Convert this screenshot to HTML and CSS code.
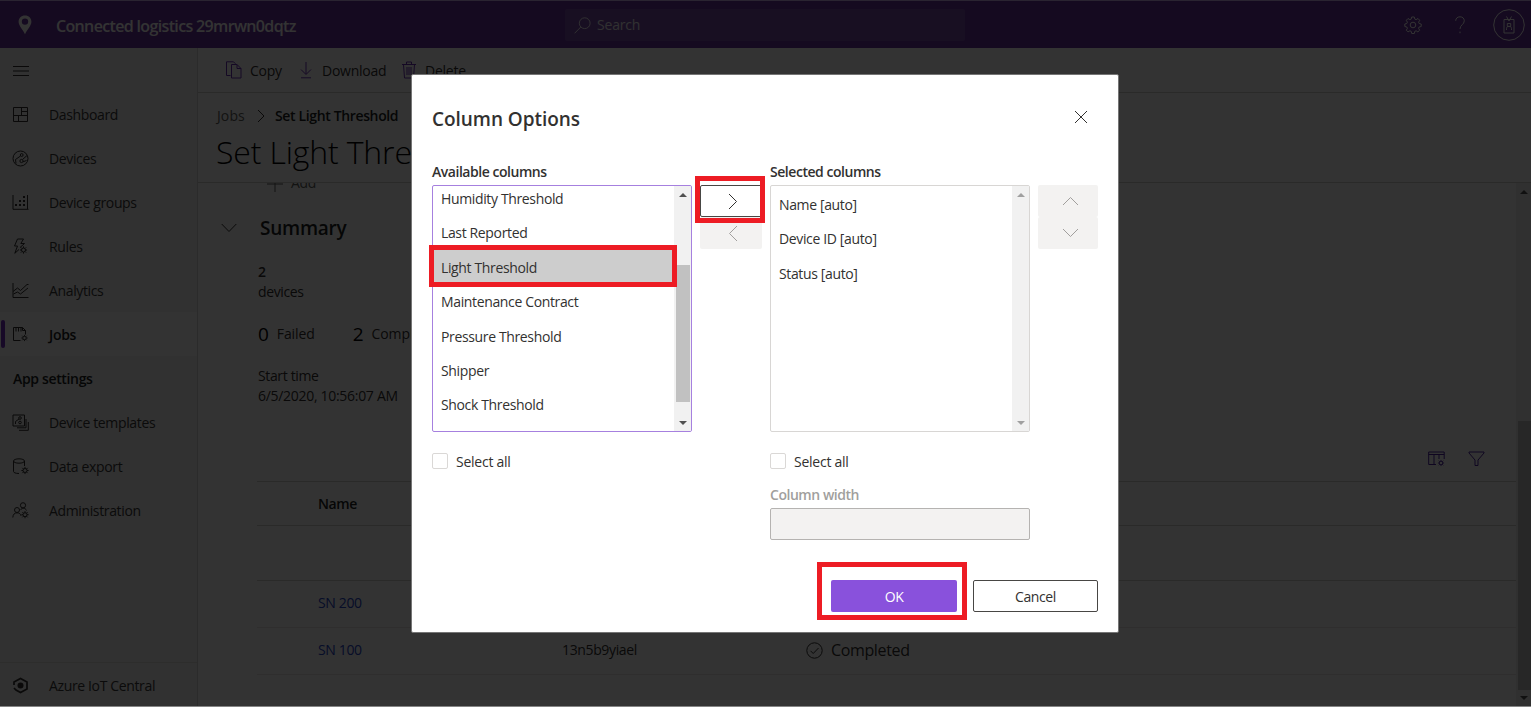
FILE: index.html
```html
<!DOCTYPE html>
<html lang="en">
<head>
<meta charset="utf-8">
<title>Connected logistics</title>
<link rel="stylesheet" href="styles.css">
</head>
<body>
<svg class="defs" width="0" height="0">
  <symbol id="cog" viewBox="0 0 8 8"><circle cx="4" cy="4" r="2"/><path d="M4 0.4v1.6M4 6v1.6M0.4 4H2M6 4h1.6M1.4 1.4l1.2 1.2M5.4 5.4l1.2 1.2M6.6 1.4L5.4 2.6M2.6 5.4L1.4 6.6"/></symbol>
</svg>
<div class="app">
  <header class="topbar">
    <svg class="pin" width="14" height="20" viewBox="0 0 14 20"><path fill-rule="evenodd" d="M7 0.5C3.2 0.5 0.6 3.2 0.6 6.8 0.6 10.5 4.4 14 7 19.3 9.6 14 13.4 10.5 13.4 6.8 13.4 3.2 10.8 0.5 7 0.5ZM7 3.4a3.2 3.2 0 1 1 0 6.4 3.2 3.2 0 0 1 0-6.4Z"/></svg>
    <span class="app-name">Connected logistics 29mrwn0dqtz</span>
    <div class="search">
      <svg class="line" width="17" height="17" viewBox="0 0 17 17"><circle cx="10.7" cy="6.2" r="5.4"/><path d="M6.8 10L0.6 16.3"/></svg>
      <span>Search</span>
    </div>
    <div class="top-icons">
      <svg class="line" width="18" height="18" viewBox="0 0 18 18"><circle cx="9" cy="9" r="2.8"/><path d="M7.7 1h2.6l.5 2.1 1.3.6 1.9-1.2 1.7 1.8-1.1 1.9.5 1.3 2.1.5v2.5l-2.1.5-.5 1.3 1.1 1.9-1.8 1.7-1.8-1.1-1.3.5-.5 2.2H7.7l-.5-2.2-1.3-.5-1.9 1.1-1.7-1.7 1.1-1.9-.6-1.3L.8 10.500V8l2-.5.6-1.300L2.300 4.300 4 2.500l1.900 1.200 1.300-.6Z"/></svg>
      <svg class="line question" width="10" height="18" viewBox="0 0 10 18"><path d="M.7 4.800C.7 2.300 2.600.8 5 .8s4.300 1.500 4.300 4c0 3.800-4.300 4-4.300 8.200M5 15.600v1.600"/></svg>
      <svg class="line" width="32" height="32" viewBox="0 0 32 32"><circle cx="16" cy="16" r="15.300"/><path d="M11 10.500h10v13.500H11ZM13.500 7.500L16 12l2.500-4.500M13.500 21v-1.500c0-3 5-3 5 0V21M14.300 14.500h3.400v3h-3.400Z"/></svg>
    </div>
  </header>
  <div class="body">
    <nav class="sidebar">
      <div class="burger"><svg class="line" width="16" height="12" viewBox="0 0 16 12"><path d="M0 1.500h16M0 6h16M0 10.500h16"/></svg></div>
      <a class="item"><svg class="line" width="17" height="17" viewBox="0 0 17 17"><path d="M1.500 1.500h14v14h-14ZM9.500 1.500v8M1.500 9.500h14M9.500 5.500h6M6.500 9.500v6"/></svg><span>Dashboard</span></a>
      <a class="item"><svg class="line" width="17" height="17" viewBox="0 0 17 17"><circle cx="8.500" cy="8.500" r="7.500"/><circle cx="9.700" cy="5" r="1.400"/><circle cx="9.500" cy="11" r="1.600"/><path d="M8.500 6L3.500 9.500 4 13.500M10.500 9.500l4.500-4M11 11.800l3.500-1.300"/></svg><span>Devices</span></a>
      <a class="item"><svg class="line" width="17" height="17" viewBox="0 0 17 17"><path d="M1 1v14.300h15.500M15.500 1v14"/><path class="solid" d="M3 10h2v2H3ZM7 10h2v2H7ZM11 10h2v2h-2ZM7 6h2v2H7ZM11 6h2v2h-2ZM11 2h2v2h-2Z"/></svg><span>Device groups</span></a>
      <a class="item"><svg class="line" width="17" height="17" viewBox="0 0 17 17"><path d="M5.500 1h6L8.800 5.500h3.700L8 9.500M5.500 1L2.500 8h3L2.800 15.300 7 11.500"/><use href="#cog" x="7.500" y="8" width="8" height="8"/></svg><span>Rules</span></a>
      <a class="item"><svg class="line" width="17" height="17" viewBox="0 0 17 17"><path d="M1 1v14.500h15.500M1 9.500L5.500 6l3 2.500L15 2.500H16.500M1.500 12l4-2 3 2 7.500-6"/></svg><span>Analytics</span></a>
      <a class="item current"><svg class="line" width="17" height="17" viewBox="0 0 17 17"><path d="M8.500 14.500h-7v-13h9l3 3v4M4 1.500v4M6.500 1.500v4M9 1.500v4M10.500 1.500v3h3"/><use href="#cog" x="9" y="8.500" width="7" height="7"/></svg><span>Jobs</span></a>
      <div class="group">App settings</div>
      <a class="item"><svg class="line" width="17" height="17" viewBox="0 0 17 17"><path d="M1 1h11.500v11H1ZM14 5v8.800H5M16.300 8v8.300H7"/><circle cx="8" cy="4" r="1.300"/><circle cx="8" cy="8.500" r="1.300"/><path d="M7 5L3.500 7.500V10"/></svg><span>Device templates</span></a>
      <a class="item"><svg class="line" width="17" height="17" viewBox="0 0 17 17"><ellipse cx="7" cy="3" rx="5.500" ry="2.200"/><path d="M1.500 3v10.500c0 1 2 2 5.500 2M12.500 3v5"/><use href="#cog" x="9" y="8.500" width="8" height="8"/></svg><span>Data export</span></a>
      <a class="item"><svg class="line" width="17" height="17" viewBox="0 0 17 17"><circle cx="5" cy="8" r="2.500"/><circle cx="11" cy="3.300" r="2.600"/><path d="M.8 15.500C1 12.500 2.500 10.800 5 10.800s3.500 1.200 4 3M8.500 8C9.500 5.800 13.500 5.500 14.500 8.500"/><use href="#cog" x="9" y="8.700" width="8" height="8"/></svg><span>Administration</span></a>
      <a class="item bottom"><svg class="line thick" width="17" height="17" viewBox="0 0 17 17"><path d="M2 8V5L8.500 1.500 15 5v7l-6.500 3.500L4 13 2 11"/><circle class="solid" cx="8.500" cy="8.500" r="3"/></svg><span>Azure IoT Central</span></a>
    </nav>
    <main class="main">
      <div class="toolbar">
        <span class="cmd"><svg class="line" width="16" height="18" viewBox="0 0 16 18"><path d="M4.500 14.500h-4V.8h7l2 2M5.500 3.500h5.500l4 4v9.500H5.500ZM11 3.500v4h4"/></svg><span class="copy">Copy</span></span>
        <span class="cmd"><svg class="line" width="12" height="18" viewBox="0 0 12 18"><path d="M6 1v12M1 8.500l5 5 5-5M1 16.800h10"/></svg><span class="download">Download</span></span>
        <span class="cmd"><svg class="line" width="14" height="18" viewBox="0 0 14 18"><path d="M0 3.500h14M4.500 3.500V1h5v2.500M1.500 3.500l1 13.500h9l1-13.500M5 6v8M7 6v8M9 6v8"/></svg><span class="delete">Delete</span></span>
      </div>
      <div class="heading">
        <div class="crumbs"><span class="crumb">Jobs</span><svg class="line" width="8" height="14" viewBox="0 0 8 14"><path d="M1 1l6 6-6 6"/></svg><span class="here">Set Light Threshold</span></div>
        <h1>Set Light Threshold</h1>
      </div>
      <div class="scroller">
        <div class="content">
          <div class="add"><svg class="line" width="16" height="16" viewBox="0 0 16 16"><path d="M8 0v16M0 8h16"/></svg><span>Add</span></div>
          <div class="summary-head"><svg class="line" width="16" height="10" viewBox="0 0 16 10"><path d="M.7 1L8 8.500 15.300 1"/></svg><h2>Summary</h2></div>
          <div class="stats">
            <div class="row strong">2</div>
            <div class="row">devices</div>
            <div class="counts"><b>0</b><span class="failed">Failed</span><b>2</b><span>Completed</span></div>
            <div class="row">Start time</div>
            <div class="row date">6/5/2020, 10:56:07 AM</div>
          </div>
          <div class="table-tools">
            <svg class="line" width="17" height="16" viewBox="0 0 17 16"><path d="M8 13.500H.7V1h15.500v7M.7 3.500h15.500M6 3.500v10M11 3.500V8"/><use href="#cog" x="9.500" y="8.500" width="7" height="7"/></svg>
            <svg class="line" width="17" height="16" viewBox="0 0 17 16"><path d="M1 1h15v1L10 9v5.500H7V9L1 2Z"/></svg>
          </div>
          <div class="table">
            <div class="tr th"><span class="name">Name</span></div>
            <div class="tr gap"></div>
            <div class="tr"><span class="name">SN 200</span></div>
            <div class="tr"><span class="name">SN 100</span><span class="id">13n5b9yiael</span><span class="state"><svg class="line" width="17" height="17" viewBox="0 0 17 17"><circle cx="8.500" cy="8.500" r="7.700"/><path d="M4.500 8.800l2.700 2.700 5.300-5.500"/></svg>Completed</span></div>
          </div>
        </div>
        <div class="page-scroll"><i class="up"></i><div class="thumb"></div><i class="down"></i></div>
      </div>
    </main>
  </div>
</div>
<div class="overlay"></div>
<section class="dialog">
  <div class="dialog-head"><h3>Column Options</h3><svg class="line" width="14" height="14" viewBox="0 0 14 14"><path d="M1 1l12 12M13 1L1 13"/></svg></div>
  <div class="pickers">
    <div class="picker">
      <label class="caption avail">Available columns</label>
      <div class="list focused">
        <ul>
          <li>Humidity Threshold</li><li>Last Reported</li><li class="picked">Light Threshold</li><li>Maintenance Contract</li><li>Pressure Threshold</li><li>Shipper</li><li>Shock Threshold</li>
        </ul>
        <div class="scrollbar"><i class="up"></i><div class="thumb"></div><i class="down"></i></div>
      </div>
      <div class="check"><i></i><span>Select all</span></div>
    </div>
    <div class="movers">
      <div class="btn active"><svg class="line" width="10" height="17" viewBox="0 0 10 17"><path d="M1 1l7.500 7.500L1 16"/></svg></div>
      <div class="btn"><svg class="line" width="10" height="17" viewBox="0 0 10 17"><path d="M9 1L1.500 8.500 9 16"/></svg></div>
    </div>
    <div class="picker">
      <label class="caption">Selected columns</label>
      <div class="list chosen">
        <ul><li>Name [auto]</li><li>Device ID [auto]</li><li>Status [auto]</li></ul>
        <div class="scrollbar"><i class="up"></i><i class="down"></i></div>
      </div>
      <div class="check"><i></i><span>Select all</span></div>
      <label class="caption width">Column width</label>
      <div class="field"></div>
    </div>
    <div class="movers order">
      <div class="btn"><svg class="line" width="17" height="10" viewBox="0 0 17 10"><path d="M1 9l7.500-7.500L16 9"/></svg></div>
      <div class="btn"><svg class="line" width="17" height="10" viewBox="0 0 17 10"><path d="M1 1l7.500 7.500L16 1"/></svg></div>
    </div>
  </div>
  <div class="actions"><div class="ok">OK</div><div class="cancel">Cancel</div></div>
  <div class="mark mark-add"></div>
  <div class="mark mark-item"></div>
  <div class="mark mark-ok"></div>
</section>
</body>
</html>
```
FILE: styles.css
```css
* { box-sizing: border-box; }
body { margin: 0; width: 1531px; height: 707px; overflow: hidden; position: relative; font: 14px/20px "Open Sans", "Noto Sans", sans-serif; letter-spacing: -0.36px; color: #323130; background: #fff; }
h1, h2, h3, ul { margin: 0; padding: 0; font-weight: 400; }
.defs { position: absolute; }
svg { flex: none; display: block; }
.line { fill: none; stroke: currentColor; stroke-width: 1; }
.line .solid { fill: currentColor; stroke: none; }
.line.thick { stroke-width: 1.7; }
.app { height: 707px; display: flex; flex-direction: column; }

.topbar { height: 48px; flex: none; display: flex; align-items: center; background: #6a34a0; border-top: 1px solid #d2b4f5; color: #fff; }
.pin { fill: #fff; margin-left: 18px; }
.app-name { margin: 3px 0 0 24px; width: 509px; font-size: 16px; font-weight: 600; letter-spacing: -0.65px; }
.search { width: 400px; height: 32px; margin-top: 1px; padding-left: 9px; display: flex; align-items: center; gap: 6px; background: #7a4aac; border-radius: 2px; color: #f0eef4; letter-spacing: -0.2px; }
.top-icons { margin-left: auto; padding-right: 6px; display: flex; align-items: center; }
.question { margin: 0 28px 0 33px; }

.body { flex: 1; display: flex; min-height: 0; }
.sidebar { width: 198px; flex: none; background: #f2f2f2; border-right: 1px solid #d8d8d8; display: flex; flex-direction: column; }
.burger { height: 44px; padding: 17px 13px; }
.item { height: 44px; display: flex; align-items: center; gap: 19px; padding-left: 13px; color: #3b3a39; }
.item span { padding-top: 2px; }
.item svg { color: #323130; margin-left: -1px; margin-right: 1px; }
.current { background: #fdfdfd; font-weight: 600; color: #201f1e; padding-left: 0; letter-spacing: -0.3px; }
.current::before { content: ""; width: 4px; height: 28px; margin: 0 -11px 0 1px; background: #742fc4; border-radius: 2px; }
.group { height: 44px; padding: 13px; font-weight: 600; letter-spacing: -0.34px; color: #201f1e; }
.bottom { height: 45px; margin-top: auto; border-top: 1px solid #e1dfdd; }

.main { flex: 1; min-width: 0; display: flex; flex-direction: column; background: #fff; }
.toolbar { height: 45px; flex: none; border-bottom: 1px solid #d2d0ce; display: flex; align-items: center; padding-left: 28px; }
.cmd { display: flex; align-items: center; }
.cmd svg { color: #6b2fb5; }
.cmd span { padding-top: 1px; letter-spacing: -0.25px; }
.cmd .copy { margin: 0 18px 0 8px; width: 32px; }
.cmd .download { margin: 0 17px 0 10px; width: 63px; }
.cmd .delete { margin-left: 9px; }
.heading { height: 90px; flex: none; border-bottom: 1px solid #d2d0ce; padding: 13px 0 0 19px; }
.crumbs { display: flex; align-items: center; }
.crumb { width: 40px; letter-spacing: 0.1px; color: #605e5c; }
.here { margin-left: 10px; font-weight: 600; letter-spacing: -0.36px; color: #201f1e; white-space: nowrap; }
h1 { font-size: 32px; line-height: 40px; margin: 6px 0 0 -1px; font-weight: 300; letter-spacing: -0.15px; color: #000; }
.scroller { flex: 1; display: flex; min-height: 0; overflow: hidden; }
.content { flex: 1; padding-left: 60px; }
.add { height: 24px; margin: -7px 0 0 9px; display: flex; gap: 8px; color: #605e5c; line-height: 14px; }
.summary-head { height: 56px; margin-left: -37px; display: flex; align-items: center; gap: 23px; }
h2 { font-size: 19px; font-weight: 600; letter-spacing: -0.25px; color: #201f1e; }
.stats { height: 201px; padding-top: 6px; }
.row { height: 20px; }
.strong { font-weight: 600; }
.counts { height: 64px; display: flex; align-items: center; gap: 8px; letter-spacing: -0.1px; }
.counts b { font-size: 19px; font-weight: 400; color: #000; }
.failed { width: 68px; }
.date { letter-spacing: -0.3px; }
.table-tools { height: 31px; display: flex; justify-content: flex-end; gap: 23px; padding: 0 31px 0 0; margin-top: -6px; color: #4c22a0; }
.table { border-top: 1px solid #d2d0ce; margin-left: -1px; margin-top: -1px; }
.tr { height: 47px; display: flex; align-items: center; border-bottom: 1px solid #e8e6e4; padding-left: 61px; }
.th { height: 44px; font-weight: 600; color: #201f1e; border-color: #d2d0ce; }
.gap { height: 55px; border-color: #d2d0ce; }
.tr:not(.th) span { margin-top: -2px; }
.name { width: 244px; }
.tr:not(.th) .name { color: #2545c8; }
.id { width: 244px; }
.tr .state { margin: 0; display: flex; align-items: center; gap: 8px; font-size: 16px; }
.page-scroll { width: 15px; flex: none; background: #f1f1f1; display: flex; flex-direction: column; align-items: center; padding-top: 7px; }
.page-scroll .thumb { width: 13px; height: 269px; margin: 227px 0 6px 2px; background: #c1c1c1; }
.up, .down { border: 4px solid transparent; width: 0; height: 0; flex: none; color: #505050; }
.up { border-bottom-color: currentColor; border-top-width: 0; }
.down { border-top-color: currentColor; border-bottom-width: 0; }
.overlay { position: absolute; inset: 0; background: rgba(0, 0, 0, .8); border-bottom: 1px solid #858585; }

.dialog { position: absolute; left: 411px; top: 74px; width: 708px; height: 559px; background: #fff; border: 1px solid #757575; border-radius: 2px; padding: 0 20px; color: #323130; }
.dialog-head { height: 87px; display: flex; justify-content: space-between; align-items: center; padding: 0 10px 4px 0; }
h3 { font-size: 19px; font-weight: 600; letter-spacing: -0.05px; color: #323130; padding-top: 4px; }
.pickers { display: flex; height: 418px; }
.picker { width: 260px; }
.caption { display: block; height: 23px; line-height: 20px; font-weight: 600; letter-spacing: -0.46px; }
.list { height: 247px; border: 1px solid #d8d6d4; border-radius: 2px; display: flex; overflow: hidden; }
.focused { border: 1px solid #a680df; }
.list ul { flex: 1; list-style: none; padding-top: 1px; }
.focused ul { margin-top: -6px; }
.list li { height: 34.4px; line-height: 35px; padding-left: 8px; }
.picked { background: #cdcdcd; }
.scrollbar { width: 17px; background: #f1f1f1; display: flex; flex-direction: column; align-items: center; justify-content: space-between; padding: 7px 0 6px; }
.chosen .up, .chosen .down { color: #a0a0a0; }
.scrollbar .thumb { width: 14px; height: 137px; margin-top: 48px; background: #c1c1c1; }
.check { display: flex; align-items: center; gap: 8px; margin-top: 19px; height: 20px; letter-spacing: -0.25px; }
.check i { width: 16px; height: 16px; border: 1px solid #dad8d6; border-radius: 2px; }
.check span { padding-top: 2px; }
.width { margin-top: 14px; color: #a19f9d; }
.field { height: 32px; background: #f3f2f1; border: 1px solid #b5b3b1; border-radius: 2px; }
.movers { width: 62px; margin: 23px 8px 0; }
.movers .btn { height: 32px; background: #f3f2f1; display: flex; align-items: center; justify-content: center; padding-left: 4px; color: #a19f9d; border-radius: 2px; }
.movers .active { background: #fff; border: 1px solid #484644; color: #323130; }
.order { width: 60px; margin-right: 0; }
.actions { display: flex; justify-content: flex-end; gap: 16px; }
.ok, .cancel { width: 126px; height: 32px; line-height: 33px; text-align: center; border-radius: 2px; }
.ok { background: #8951dc; color: #fff; }
.cancel { width: 125px; line-height: 31px; border: 1px solid #484644; }
.mark { position: absolute; border: 5px solid #ed1c24; }
.mark-add { left: 283px; top: 101px; width: 70px; height: 47px; }
.mark-item { left: 17px; top: 170px; width: 248px; height: 42px; }
.mark-ok { left: 405px; top: 487px; width: 150px; height: 58px; }
```
